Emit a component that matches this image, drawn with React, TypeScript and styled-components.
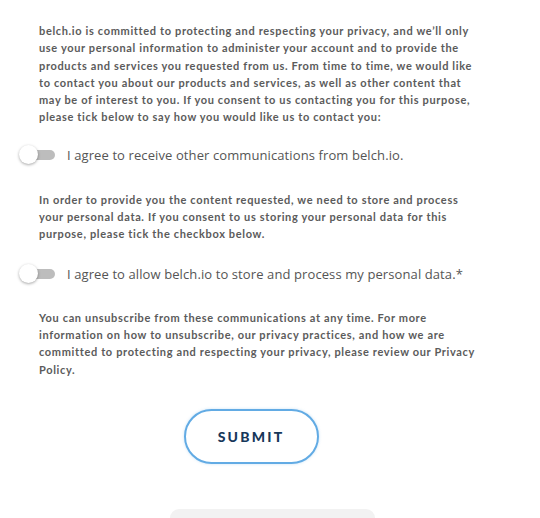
import React from "react";
import styled, { createGlobalStyle } from "styled-components";

const Global = createGlobalStyle`
  html, body { margin: 0; padding: 0; background: #ffffff; }
  body { font-family: "Lato", "Liberation Sans", sans-serif; }
`;

const Page = styled.div`
  width: 540px;
  height: 518px;
  overflow: hidden;
  padding: 22px 0 0 20px;
  box-sizing: border-box;
  display: flex;
  flex-direction: column;
`;

const Para = styled.p`
  margin: 0 0 0 19px;
  width: 480px;
  white-space: nowrap;
  font-family: "Lato", "Liberation Sans", sans-serif;
  font-weight: 700;
  font-size: 11px;
  line-height: 17.3px;
  letter-spacing: 0.65px;
  color: #5b5b5b;
`;

const ToggleRow = styled.label<{ $top: number; $bottom: number }>`
  display: flex;
  align-items: center;
  gap: 12px;
  margin: ${(p) => p.$top}px 0 ${(p) => p.$bottom}px 0;
  cursor: pointer;
`;

const Track = styled.span`
  position: relative;
  display: block;
  width: 33px;
  height: 10px;
  margin-left: 2px;
  border-radius: 5px;
  background: #bdbdbd;
  flex: none;
`;

const Knob = styled.span`
  position: absolute;
  left: -3px;
  top: -5px;
  width: 19px;
  height: 19px;
  border-radius: 50%;
  background: #ffffff;
  box-shadow: 0 1px 3px rgba(0, 0, 0, 0.35);
`;

const Label = styled.span`
  font-family: "Open Sans", "Liberation Sans", sans-serif;
  font-size: 13px;
  color: #555555;
  letter-spacing: 0.1px;
`;

const Actions = styled.div`
  display: flex;
  justify-content: center;
  margin: 31px 0 0 -20px;
  width: 540px;
  padding-right: 38px;
  box-sizing: border-box;
`;

const SubmitButton = styled.button`
  width: 135px;
  height: 55px;
  border-radius: 28px;
  border: 2px solid #62abe4;
  background: #ffffff;
  box-shadow: 0 0 3px rgba(98, 171, 228, 0.35);
  font-family: "Lato", "Liberation Sans", sans-serif;
  font-weight: 900;
  font-size: 14px;
  letter-spacing: 2.2px;
  color: #17375a;
  cursor: pointer;
`;

const Footer = styled.div`
  align-self: flex-start;
  margin: 45px 0 0 150px;
  width: 205px;
  height: 20px;
  border-radius: 14px 14px 0 0;
  background: #f2f2f2;
`;

function Toggle() {
  return (
    <Track>
      <Knob />
    </Track>
  );
}

export default function App() {
  return (
    <>
      <Global />
      <Page>
        <Para>
          belch.io is committed to protecting and respecting your privacy, and we’ll only<br />
          use your personal information to administer your account and to provide the<br />
          products and services you requested from us. From time to time, we would like<br />
          to contact you about our products and services, as well as other content that<br />
          may be of interest to you. If you consent to us contacting you for this purpose,<br />
          please tick below to say how you would like us to contact you:
        </Para>
        <ToggleRow $top={20} $bottom={27}>
          <Toggle />
          <Label>I agree to receive other communications from belch.io.</Label>
        </ToggleRow>
        <Para>
          In order to provide you the content requested, we need to store and process<br />
          your personal data. If you consent to us storing your personal data for this<br />
          purpose, please tick the checkbox below.
        </Para>
        <ToggleRow $top={22} $bottom={26}>
          <Toggle />
          <Label>I agree to allow belch.io to store and process my personal data.*</Label>
        </ToggleRow>
        <Para>
          You can unsubscribe from these communications at any time. For more<br />
          information on how to unsubscribe, our privacy practices, and how we are<br />
          committed to protecting and respecting your privacy, please review our Privacy<br />
          Policy.
        </Para>
        <Actions>
          <SubmitButton type="button">SUBMIT</SubmitButton>
        </Actions>
        <Footer />
      </Page>
    </>
  );
}
